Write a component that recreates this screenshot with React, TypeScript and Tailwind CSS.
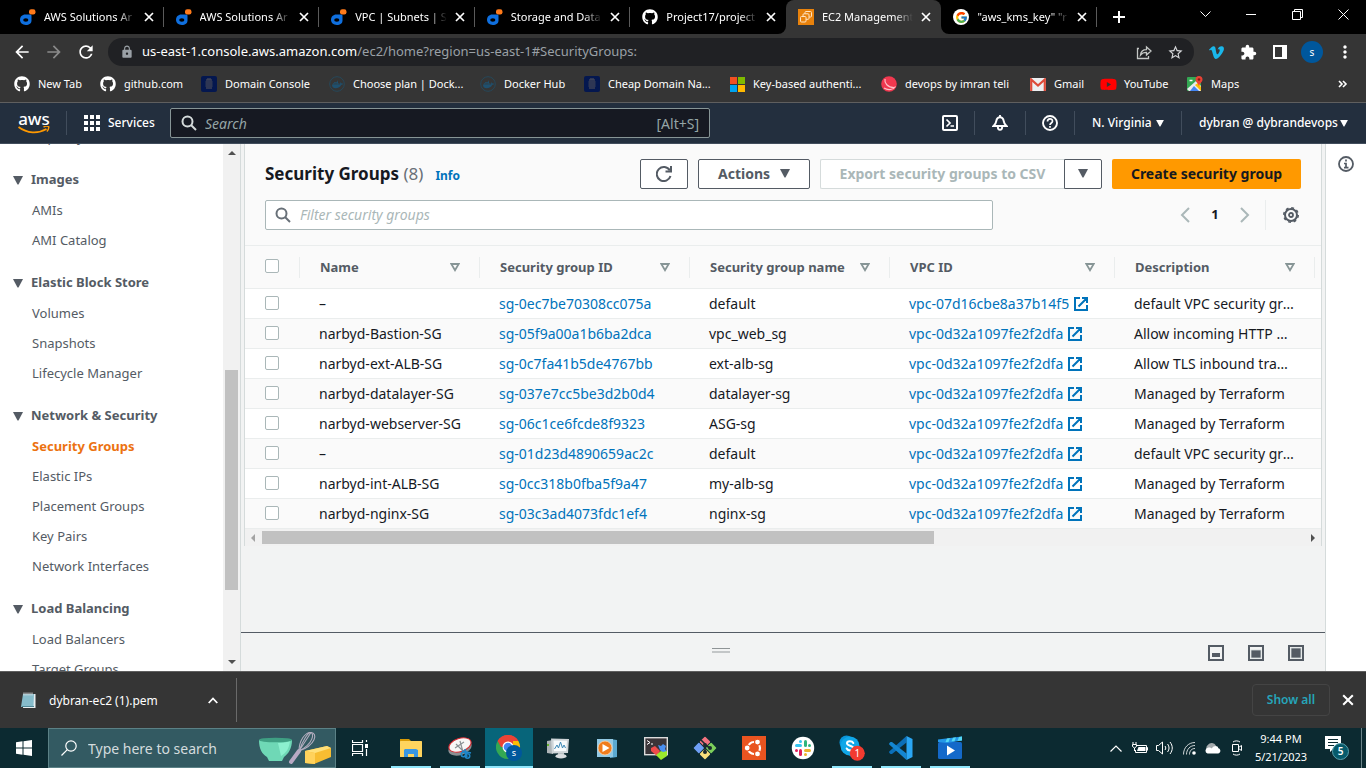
import React from "react";
import {
  MdArrowBack,
  MdArrowForward,
  MdExtension,
  MdLock,
  MdMoreVert,
  MdRefresh,
  MdStarBorder,
} from "react-icons/md";
import { FaDocker, FaGithub, FaVimeoV, FaYoutube } from "react-icons/fa";
import { FcGoogle } from "react-icons/fc";

/* ---------- shared icons ---------- */

function DareyIcon() {
  return (
    <svg width="16" height="16" viewBox="0 0 16 16" aria-hidden="true">
      <path fill="#0f6fde" d="M5.500 5.500h4.500c1 0 1.500.5 1.500 1.500v4.500c0 2.800-2.300 4.500-5.700 4.500C2.300 16 0 13.700 0 10.800s2-5.300 5.500-5.300z" />
      <ellipse cx="5.800" cy="11" rx="2.600" ry="1.700" fill="#000" />
      <rect x="9" y="0.300" width="6.500" height="5.200" rx="2.200" fill="#ff7a1a" />
    </svg>
  );
}

function Ec2Icon() {
  return (
    <svg width="16" height="16" viewBox="0 0 16 16" aria-hidden="true">
      <rect width="16" height="16" fill="#e8820c" />
      <g fill="#e8820c" stroke="#ffe3c2" strokeWidth="1">
        <rect x="7" y="2.500" width="6.500" height="5.500" rx="1" />
        <rect x="5" y="4.800" width="6" height="5.500" rx="1" />
        <rect x="2.500" y="7.500" width="5.500" height="5.500" rx="1" />
      </g>
    </svg>
  );
}

function CloseIcon({ size = 10 }: { size?: number }) {
  return (
    <svg width={size} height={size} viewBox="0 0 10 10" aria-hidden="true">
      <path d="M1 1l8 8M9 1l-8 8" stroke="currentColor" strokeWidth="1.700" fill="none" />
    </svg>
  );
}

function Triangle({ className = "" }: { className?: string }) {
  return (
    <svg width="10" height="9" viewBox="0 0 10 9" className={"shrink-0 " + className} aria-hidden="true">
      <path d="M0 0h10L5.500 8.500h-1z" fill="currentColor" />
    </svg>
  );
}

function SortIcon() {
  return (
    <svg width="10" height="9" viewBox="0 0 10 9" aria-hidden="true">
      <path d="M1.300 1h7.400L5 7.200z" fill="none" stroke="#879596" strokeWidth="1.800" />
    </svg>
  );
}

function SearchIcon({ className = "" }: { className?: string }) {
  return (
    <svg width="16" height="16" viewBox="0 0 16 16" className={className} aria-hidden="true">
      <circle cx="6.500" cy="6.500" r="5" fill="none" stroke="currentColor" strokeWidth="2" />
      <path d="M10 10l5 5" stroke="currentColor" strokeWidth="2" />
    </svg>
  );
}

/* ---------- browser: tabs ---------- */

type TabInfo = { title: string; icon: React.ReactNode; active?: boolean; beforeActive?: boolean };

const tabs: TabInfo[] = [
  { title: "AWS Solutions Ar", icon: <DareyIcon /> },
  { title: "AWS Solutions Ar", icon: <DareyIcon /> },
  { title: "VPC | Subnets | Se", icon: <DareyIcon /> },
  { title: "Storage and Data", icon: <DareyIcon /> },
  { title: "Project17/project", icon: <FaGithub size={16} />, beforeActive: true },
  { title: "EC2 Management", icon: <Ec2Icon />, active: true },
  {
    title: '"aws_kms_key" "r',
    icon: (
      <span className="flex size-4 items-center justify-center rounded-full bg-white">
        <FcGoogle size={13} />
      </span>
    ),
  },
];

function Tab({ tab }: { tab: TabInfo }) {
  return (
    <div
      role="tab"
      aria-selected={!!tab.active}
      className={
        "relative flex h-[34px] min-w-0 flex-1 items-center pl-3 pr-[10px] text-white " +
        (tab.active ? "rounded-t-lg bg-[#353535]" : "")
      }
    >
      <span className="mr-2 flex size-4 shrink-0 items-center">{tab.icon}</span>
      <span className="min-w-0 flex-1 overflow-hidden whitespace-nowrap [mask-image:linear-gradient(to_right,#000_80%,transparent)]">
        {tab.title}
      </span>
      <button aria-label={"Close " + tab.title} className="ml-2 flex w-[10px] shrink-0">
        <CloseIcon />
      </button>
      {tab.active ? (
        <>
          <svg className="absolute bottom-0 -left-2" width="8" height="8" viewBox="0 0 8 8" aria-hidden="true">
            <path d="M8 0v8H0a8 8 0 0 0 8-8z" fill="#353535" />
          </svg>
          <svg className="absolute bottom-0 -right-2" width="8" height="8" viewBox="0 0 8 8" aria-hidden="true">
            <path d="M0 0v8h8a8 8 0 0 1-8-8z" fill="#353535" />
          </svg>
        </>
      ) : (
        !tab.beforeActive && <span className="absolute top-[7px] right-0 h-5 w-px bg-[#5a5a5a]" />
      )}
    </div>
  );
}

function TabStrip() {
  return (
    <div className="flex h-[34px] shrink-0 items-stretch bg-black pl-2">
      <div role="tablist" className="flex w-[1089px] min-w-0">
        {tabs.map((t, i) => (
          <Tab key={i} tab={t} />
        ))}
      </div>
      <button aria-label="New tab" className="ml-4 flex items-center text-white">
        <svg width="12" height="12" viewBox="0 0 12 12" aria-hidden="true">
          <path d="M6 0v12M0 6h12" stroke="currentColor" strokeWidth="2" />
        </svg>
      </button>
      <div className="ml-auto flex h-7 text-white">
        <button aria-label="Search tabs" className="flex w-[46px] items-center justify-center">
          <svg width="11" height="7" viewBox="0 0 11 7" aria-hidden="true">
            <path d="M.5.500l5 5 5-5" fill="none" stroke="currentColor" />
          </svg>
        </button>
        <button aria-label="Minimize" className="flex w-[46px] items-center justify-center">
          <span className="h-px w-[10px] bg-white" />
        </button>
        <button aria-label="Restore" className="flex w-[46px] items-center justify-center">
          <svg width="11" height="11" viewBox="0 0 11 11" aria-hidden="true">
            <path d="M.5 2.500h8v8h-8zM2.500 2.500v-2h8v8h-2" fill="none" stroke="currentColor" />
          </svg>
        </button>
        <button aria-label="Close window" className="flex w-[46px] items-center justify-center">
          <svg width="11" height="11" viewBox="0 0 11 11" aria-hidden="true">
            <path d="M.5.500l10 10M10.500.500l-10 10" fill="none" stroke="currentColor" />
          </svg>
        </button>
      </div>
    </div>
  );
}

/* ---------- browser: toolbar and bookmarks ---------- */

function Toolbar() {
  return (
    <div className="flex h-9 shrink-0 items-center bg-[#353535] pr-3 pl-3 text-white">
      <button aria-label="Back" className="flex w-5 justify-center">
        <MdArrowBack size={20} />
      </button>
      <button aria-label="Forward" className="ml-3 flex w-5 justify-center text-[#8a8a8a]">
        <MdArrowForward size={20} />
      </button>
      <button aria-label="Reload" className="ml-3 flex w-5 justify-center">
        <MdRefresh size={20} />
      </button>
      <div className="ml-3 flex h-7 min-w-0 flex-1 items-center rounded-full bg-[#202124] pr-[10px] pl-3">
        <MdLock size={14} className="mr-2 shrink-0 text-[#9aa0a6]" />
        <span className="truncate text-[13px] text-[#9aa0a6]">
          <span className="text-white">us-east-1.console.aws.amazon.com</span>/ec2/home?region=us-east-1#SecurityGroups:
        </span>
        <button aria-label="Share" className="ml-auto text-[#c4c7c5]">
          <svg width="16" height="16" viewBox="0 0 16 16" aria-hidden="true">
            <path
              d="M3 4.500H1.500v10h11V12M4.500 11c.4-3.600 2.500-5.300 6-5.300V3L15 7l-4.500 4V8.300c-2.600 0-4.500.7-6 2.700z"
              fill="none"
              stroke="currentColor"
              strokeWidth="1.300"
            />
          </svg>
        </button>
        <button aria-label="Bookmark this page" className="ml-[15px] text-[#d5d7d9]">
          <MdStarBorder size={17} />
        </button>
      </div>
      <button aria-label="Vimeo" className="ml-[14px] text-[#1ab7ea]">
        <FaVimeoV size={17} />
      </button>
      <button aria-label="Extensions" className="ml-[15px]">
        <MdExtension size={17} />
      </button>
      <button aria-label="Side panel" className="ml-4">
        <svg width="14" height="14" viewBox="0 0 14 14" aria-hidden="true">
          <path d="M1 1h12v12H1z" fill="none" stroke="currentColor" strokeWidth="2" />
          <path d="M9 1h4v12H9z" fill="currentColor" />
        </svg>
      </button>
      <button
        aria-label="Profile"
        className="ml-[14px] flex size-[22px] items-center justify-center rounded-full bg-[#00579c] text-[10px]"
      >
        s
      </button>
      <button aria-label="Menu" className="ml-[13px] flex w-[18px] justify-center">
        <MdMoreVert size={20} className="shrink-0" />
      </button>
    </div>
  );
}

function NamecheapIcon() {
  return (
    <svg width="16" height="16" viewBox="0 0 16 16" aria-hidden="true">
      <rect width="16" height="16" rx="2" fill="#04174f" />
      <path d="M5 4h6M4.500 6h7M4.500 8h7M4.500 10h7M5 12h6M6 3h4" stroke="#3c4257" strokeWidth="1.400" />
    </svg>
  );
}

function DockerIcon() {
  return (
    <span className="relative flex size-4 shrink-0 items-center justify-center text-[#1f506e]">
      <svg className="absolute inset-0" width="16" height="16" viewBox="0 0 16 16" aria-hidden="true">
        <circle cx="8" cy="8" r="7.300" fill="none" stroke="#26485a" strokeWidth="1" />
      </svg>
      <FaDocker size={11} />
    </span>
  );
}

function MicrosoftIcon() {
  return (
    <svg width="15" height="15" viewBox="0 0 15 15" aria-hidden="true">
      <rect width="7" height="7" fill="#f25022" />
      <rect x="8" width="7" height="7" fill="#7fba00" />
      <rect y="8" width="7" height="7" fill="#00a4ef" />
      <rect x="8" y="8" width="7" height="7" fill="#ffb900" />
    </svg>
  );
}

function BallIcon() {
  return (
    <svg width="16" height="16" viewBox="0 0 16 16" aria-hidden="true">
      <circle cx="8" cy="8" r="7.800" fill="#f0384f" />
      <path d="M4 3c-.8 4 2.500 8.500 9 8.500M3 12c4 2.500 9 2 11.500-1.500" fill="none" stroke="#ffc0c8" strokeWidth="1.200" />
    </svg>
  );
}

function GmailIcon() {
  return (
    <svg width="16" height="13" viewBox="0 0 16 13" aria-hidden="true">
      <rect width="16" height="13" rx="1" fill="#eceff1" />
      <path d="M1.200 13V1.500L8 7.500l6.800-6V13" fill="none" stroke="#dd4b39" strokeWidth="2.200" />
    </svg>
  );
}

function MapsIcon() {
  return (
    <svg width="16" height="16" viewBox="0 0 16 16" aria-hidden="true">
      <rect y="1" width="14" height="14" rx="1" fill="#34a853" />
      <path d="M0 13L9 5l5 5v5H2z" fill="#e8eaed" />
      <path d="M3 15l4-5 5 5z" fill="#4285f4" />
      <path d="M8 9l3-2 3 4v4z" fill="#fbbc04" />
      <path d="M2.500 4.500h3" stroke="#fff" strokeWidth="1.500" />
      <path d="M12 0a3.500 3.500 0 0 1 3.500 3.500C15.500 6 12.500 7 12 10.500 11.500 7 8.500 6 8.500 3.500A3.500 3.500 0 0 1 12 0z" fill="#ea4335" />
      <circle cx="12" cy="3.500" r="1.300" fill="#8b1a12" />
    </svg>
  );
}

const bookmarks: { label: string; icon: React.ReactNode; width: string }[] = [
  { label: "New Tab", icon: <FaGithub size={16} />, width: "w-[86px]" },
  { label: "github.com", icon: <FaGithub size={16} />, width: "w-[101px]" },
  { label: "Domain Console", icon: <NamecheapIcon />, width: "w-[128px]" },
  { label: "Choose plan | Dock...", icon: <DockerIcon />, width: "w-[151px]" },
  { label: "Docker Hub", icon: <DockerIcon />, width: "w-[104px]" },
  { label: "Cheap Domain Na...", icon: <NamecheapIcon />, width: "w-[145px]" },
  { label: "Key-based authenti...", icon: <MicrosoftIcon />, width: "w-[152px]" },
  { label: "devops by imran teli", icon: <BallIcon />, width: "w-[149px]" },
  { label: "Gmail", icon: <GmailIcon />, width: "w-[70px]" },
  { label: "YouTube", icon: <FaYoutube size={17} className="shrink-0 text-[#f00]" />, width: "w-[87px]" },
  { label: "Maps", icon: <MapsIcon />, width: "w-[60px]" },
];

function Bookmarks() {
  return (
    <nav
      aria-label="Bookmarks"
      className="flex h-[33px] shrink-0 items-center border-b border-[#5f5f5f] bg-[#353535] pb-1 pr-[18px] pl-[14px] text-white"
    >
      {bookmarks.map((b) => (
        <a key={b.label} href="#" className={"flex shrink-0 items-center whitespace-nowrap " + b.width}>
          <span className="mr-2 flex w-4 shrink-0 items-center justify-center">{b.icon}</span>
          {b.label}
        </a>
      ))}
      <button aria-label="More bookmarks" className="ml-auto">
        <svg width="10" height="8" viewBox="0 0 10 8" aria-hidden="true">
          <path d="M1 1l3 3-3 3M5 1l3 3-3 3" fill="none" stroke="currentColor" strokeWidth="1.600" />
        </svg>
      </button>
    </nav>
  );
}

/* ---------- console header ---------- */

function AwsLogo() {
  return (
    <a href="#" aria-label="AWS home" className="flex w-8 flex-col items-center text-white">
      <span className="text-[17px] leading-[14px] font-medium">aws</span>
      <svg width="32" height="8" viewBox="0 0 32 8" aria-hidden="true">
        <path d="M.5 1C9 7.500 20 8 28.500 3" fill="none" stroke="#f90" strokeWidth="1.800" />
        <path d="M25.500 1c2-1 4.200-.9 5.200-.3.300 1.500-.6 3.600-1.900 4.800" fill="none" stroke="#f90" strokeWidth="1.400" />
      </svg>
    </a>
  );
}

function HeaderDivider() {
  return <span className="h-6 w-px shrink-0 bg-[#414d5c]" />;
}

function ConsoleHeader() {
  return (
    <header className="flex h-[41px] shrink-0 items-center border-b border-[#414d5c] bg-[#232f3e] pl-[18px] text-[12px] font-medium text-white">
      <AwsLogo />
      <span className="ml-4 flex">
        <HeaderDivider />
      </span>
      <button className="ml-[17px] flex items-center">
        <svg width="16" height="16" viewBox="0 0 16 16" fill="currentColor" aria-hidden="true">
          <path d="M0 0h4v4H0zM6 0h4v4H6zM12 0h4v4h-4zM0 6h4v4H0zM6 6h4v4H6zM12 6h4v4h-4zM0 12h4v4H0zM6 12h4v4H6zM12 12h4v4h-4z" />
        </svg>
        <span className="ml-2 w-12 text-left whitespace-nowrap">Services</span>
      </button>
      <label className="ml-[14px] flex h-[30px] max-w-[540px] flex-1 items-center rounded-xs border border-[#879596] bg-[#161922] px-[10px] text-[14px] font-normal text-[#95a5a6]">
        <SearchIcon className="mr-2 text-[#d5dbdb]" />
        <input
          aria-label="Search"
          placeholder="Search"
          className="min-w-0 flex-1 bg-transparent italic outline-none placeholder:text-[#95a5a6]"
        />
        <span>[Alt+S]</span>
      </label>
      <div className="ml-auto flex items-center">
        <button aria-label="CloudShell" className="mr-4">
          <svg width="16" height="16" viewBox="0 0 16 16" aria-hidden="true" fill="none" stroke="currentColor" strokeWidth="2">
            <rect x="1" y="1" width="14" height="14" rx="1" />
            <path d="M4.500 4.500L8 8l-3.500 3.500M8.500 11h3.500" strokeWidth="1.700" />
          </svg>
        </button>
        <HeaderDivider />
        <button aria-label="Notifications" className="mx-[17px]">
          <svg width="16" height="16" viewBox="0 0 16 16" aria-hidden="true" fill="none" stroke="currentColor" strokeWidth="1.900">
            <path d="M8 0v2.500M1.500 11h13c-2-1.500-2.500-3-2.800-5C11.300 3.500 10 2.300 8 2.300S4.700 3.500 4.300 6c-.3 2-.8 3.500-2.800 5z" />
            <path d="M5.800 11.500c0 4.500 4.400 4.500 4.400 0" />
          </svg>
        </button>
        <HeaderDivider />
        <button aria-label="Help" className="mx-4">
          <svg width="16" height="16" viewBox="0 0 16 16" aria-hidden="true" fill="none" stroke="currentColor" strokeWidth="1.900">
            <circle cx="8" cy="8" r="7" />
            <path d="M5.500 6.500C5.500 3 10.500 3 10.500 6.300 10.500 8 8 8 8 10M8 11v1.800" strokeWidth="1.700" />
          </svg>
        </button>
        <HeaderDivider />
        <button className="mx-[17px] flex w-[72px] items-center justify-between whitespace-nowrap">
          N. Virginia
          <Triangle className="h-[7px] w-2" />
        </button>
        <HeaderDivider />
        <button className="ml-[17px] mr-[18px] flex w-[149px] items-center justify-between whitespace-nowrap">
          dybran @ dybrandevops
          <Triangle className="h-[7px] w-2" />
        </button>
      </div>
    </header>
  );
}

/* ---------- sidebar ---------- */

const sections: { title: string; items: string[] }[] = [
  { title: "Images", items: ["AMIs", "AMI Catalog"] },
  { title: "Elastic Block Store", items: ["Volumes", "Snapshots", "Lifecycle Manager"] },
  {
    title: "Network & Security",
    items: ["Security Groups", "Elastic IPs", "Placement Groups", "Key Pairs", "Network Interfaces"],
  },
  { title: "Load Balancing", items: ["Load Balancers", "Target Groups"] },
];

function SideLink({ label }: { label: string }) {
  const selected = label === "Security Groups";
  return (
    <li className="flex h-[30px] items-center pl-8">
      <a href="#" className={selected ? "font-bold text-[#ec7211]" : "text-[#545b64]"}>
        {label}
      </a>
    </li>
  );
}

function Sidebar() {
  return (
    <div className="flex w-[241px] shrink-0 overflow-hidden border-r border-[#d5dbdb] bg-white">
      <nav aria-label="EC2 navigation" className="-mt-[21px] flex-1">
        <ul>
          <SideLink label="Capacity Reservations" />
        </ul>
        {sections.map((s) => (
          <section key={s.title}>
            <h2 className="mt-[11px] flex h-8 items-center pl-[13px] font-bold text-[#545b64]">
              <Triangle className="mr-2" />
              {s.title}
            </h2>
            <ul>
              {s.items.map((i) => (
                <SideLink key={i} label={i} />
              ))}
            </ul>
          </section>
        ))}
      </nav>
      <div className="flex w-[17px] flex-col items-center bg-[#f1f1f1] py-[7px]">
        <svg width="8" height="4" viewBox="0 0 8 4" aria-hidden="true">
          <path d="M0 4l4-4 4 4z" fill="#505050" />
        </svg>
        <div className="flex w-full flex-1 flex-col px-[2px]">
          <span className="grow-[215]" />
          <span className="grow-[220] bg-[#c1c1c1]" />
          <span className="grow-[70]" />
        </div>
        <svg width="8" height="4" viewBox="0 0 8 4" aria-hidden="true">
          <path d="M0 0l4 4 4-4z" fill="#505050" />
        </svg>
      </div>
    </div>
  );
}

/* ---------- security groups ---------- */

const columns = ["Name", "Security group ID", "Security group name", "VPC ID", "Description"];

const mainVpc = "vpc-0d32a1097fe2f2dfa";

const rows = [
  ["–", "sg-0ec7be70308cc075a", "default", "vpc-07d16cbe8a37b14f5", "default VPC security group"],
  ["narbyd-Bastion-SG", "sg-05f9a00a1b6ba2dca", "vpc_web_sg", mainVpc, "Allow incoming HTTP & HTTPS"],
  ["narbyd-ext-ALB-SG", "sg-0c7fa41b5de4767bb", "ext-alb-sg", mainVpc, "Allow TLS inbound traffic"],
  ["narbyd-datalayer-SG", "sg-037e7cc5be3d2b0d4", "datalayer-sg", mainVpc, "Managed by Terraform"],
  ["narbyd-webserver-SG", "sg-06c1ce6fcde8f9323", "ASG-sg", mainVpc, "Managed by Terraform"],
  ["–", "sg-01d23d4890659ac2c", "default", mainVpc, "default VPC security group"],
  ["narbyd-int-ALB-SG", "sg-0cc318b0fba5f9a47", "my-alb-sg", mainVpc, "Managed by Terraform"],
  ["narbyd-nginx-SG", "sg-03c3ad4073fdc1ef4", "nginx-sg", mainVpc, "Managed by Terraform"],
];

function Checkbox({ label }: { label: string }) {
  return (
    <input
      type="checkbox"
      aria-label={label}
      className="block size-[14px] appearance-none rounded-xs border border-[#aab7b8] bg-white"
    />
  );
}

function ExternalIcon() {
  return (
    <svg width="14" height="14" viewBox="0 0 14 14" className="shrink-0" aria-hidden="true">
      <path d="M6 1H1v12h12V8M8 1h5v5M12.500 1.500l-8 8" fill="none" stroke="#0073bb" strokeWidth="2" />
    </svg>
  );
}

function GroupTable() {
  return (
    <table className="w-full table-fixed border-collapse">
      <colgroup>
        <col className="w-[55px]" />
        <col className="w-[180px]" />
        <col className="w-[210px]" />
        <col className="w-[200px]" />
        <col className="w-[225px]" />
        <col className="w-[200px]" />
        <col />
      </colgroup>
      <thead>
        <tr className="h-[43px] border-y border-[#eaeded] bg-[#fafafa] text-left text-[#545b64]">
          <th className="p-0">
            <div className="flex h-[21px] items-center border-r border-[#eaeded] pb-[2px] pl-5">
              <Checkbox label="Select all" />
            </div>
          </th>
          {columns.map((c) => (
            <th key={c} className="p-0 text-[13px] font-bold">
              <div className="flex h-[21px] items-center justify-between border-r border-[#eaeded] pt-px pr-[19px] pl-5 whitespace-nowrap">
                {c}
                <SortIcon />
              </div>
            </th>
          ))}
          <td className="p-0" />
        </tr>
      </thead>
      <tbody className="text-[14px] leading-5">
        {rows.map((r, i) => (
          <tr key={r[1]} className={"h-[30px] border-b border-[#eaeded] " + (i % 2 ? "bg-[#fafafa]" : "bg-white")}>
            <td className="p-0 pb-[2px] pl-5">
              <Checkbox label={"Select " + r[1]} />
            </td>
            <td className="p-0 pl-[19px]">{r[0]}</td>
            <td className="p-0 pl-[19px]">
              <a href="#" className="text-[#0073bb]">
                {r[1]}
              </a>
            </td>
            <td className="p-0 pl-[19px]">{r[2]}</td>
            <td className="p-0 pl-[19px]">
              <a href="#" className="flex items-center gap-[5px] text-[#0073bb]">
                {r[3]}
                <ExternalIcon />
              </a>
            </td>
            <td className="truncate p-0 pr-5 pl-[19px]">{r[4]}</td>
            <td className="p-0" />
          </tr>
        ))}
      </tbody>
    </table>
  );
}

function PanelToolbar() {
  return (
    <div className="px-5 pt-[15px] pb-[15px]">
      <div className="flex items-center">
        <h1 className="text-[17px] font-bold whitespace-nowrap">
          Security Groups <span className="font-normal text-[#687078]">(8)</span>
        </h1>
        <a href="#" className="ml-3 pt-1 text-[12px] font-bold text-[#0073bb]">
          Info
        </a>
        <div className="ml-auto flex h-[30px] text-[14px] font-bold text-[#545b64]">
          <button aria-label="Refresh" className="flex w-12 items-center justify-center rounded-xs border border-[#545b64] bg-white">
            <svg width="16" height="16" viewBox="0 0 16 16" aria-hidden="true" fill="none" stroke="currentColor" strokeWidth="2">
              <path d="M14.500 10A7 7 0 1 1 13.800 4.500" />
              <path d="M15 0v5.500H9.500" />
            </svg>
          </button>
          <button className="ml-[10px] flex w-28 items-center justify-center gap-[10px] rounded-xs border border-[#545b64] bg-white pb-px">
            Actions
            <Triangle />
          </button>
          <button disabled className="ml-[10px] w-[244px] rounded-l-xs border border-r-0 border-[#d5dbdb] bg-white pb-px whitespace-nowrap text-[#aab7b8]">
            Export security groups to CSV
          </button>
          <button aria-label="Export options" className="flex w-[38px] items-center justify-center rounded-r-xs border border-[#545b64] bg-white pb-px">
            <Triangle />
          </button>
          <button className="ml-[10px] w-[189px] rounded-xs bg-[#f90] pb-px whitespace-nowrap text-[#16191f]">
            Create security group
          </button>
        </div>
      </div>
      <div className="mt-[11px] flex items-center justify-between">
        <label className="flex h-[30px] max-w-[728px] flex-1 items-center rounded-xs border border-[#aab7b8] bg-white px-[9px] pb-px text-[#687078]">
          <SearchIcon className="mr-[9px]" />
          <input
            aria-label="Filter security groups"
            placeholder="Filter security groups"
            className="min-w-0 flex-1 bg-transparent text-[14px] italic outline-none placeholder:text-[#aab7b8]"
          />
        </label>
        <div className="flex h-[30px] items-center text-[#aab7b8]">
          <button aria-label="Previous page">
            <svg width="10" height="16" viewBox="0 0 10 16" aria-hidden="true">
              <path d="M9 1L2 8l7 7" fill="none" stroke="currentColor" strokeWidth="2" />
            </svg>
          </button>
          <button className="w-[50px] text-center text-[13px] font-bold text-[#16191f]">1</button>
          <button aria-label="Next page">
            <svg width="10" height="16" viewBox="0 0 10 16" aria-hidden="true">
              <path d="M1 1l7 7-7 7" fill="none" stroke="currentColor" strokeWidth="2" />
            </svg>
          </button>
          <span className="ml-[15px] h-full w-px bg-[#eaeded]" />
          <button aria-label="Preferences" className="mr-[2px] ml-[17px] text-[#545b64]">
            <svg width="16" height="16" viewBox="0 0 16 16" aria-hidden="true" fill="none" stroke="currentColor">
              <circle cx="8" cy="8" r="6" strokeWidth="2" />
              <circle cx="8" cy="8" r="7.200" strokeWidth="1.600" strokeDasharray="2.830 2.825" />
              <circle cx="8" cy="8" r="2" strokeWidth="1.800" />
            </svg>
          </button>
        </div>
      </div>
    </div>
  );
}

function LayoutIcon({ kind }: { kind: "bottom" | "half" | "full" }) {
  return (
    <svg width="16" height="16" viewBox="0 0 16 16" aria-hidden="true">
      <rect x="1" y="1" width="14" height="14" fill="none" stroke="#545b64" strokeWidth="2" />
      {kind === "bottom" && <rect x="4" y="8" width="8" height="4" fill="#545b64" />}
      {kind === "half" && <rect x="3" y="5" width="10" height="8" fill="#545b64" stroke="#d5dbdb" strokeWidth="0.800" />}
      {kind === "full" && <rect x="3" y="3" width="10" height="10" fill="#545b64" stroke="#d5dbdb" strokeWidth="0.800" />}
    </svg>
  );
}

function Content() {
  return (
    <main className="flex min-w-0 flex-1 flex-col border-r border-[#d5dbdb] bg-[#f2f3f3]">
      <div className="mx-[3px] border-x border-[#d5dbdb] bg-[#fafafa]">
        <PanelToolbar />
        <GroupTable />
        <div className="flex h-[17px] items-center bg-[#f1f1f1] px-[6px]">
          <svg width="4" height="8" viewBox="0 0 4 8" aria-hidden="true">
            <path d="M4 0v8L0 4z" fill="#a3a3a3" />
          </svg>
          <div className="mx-[7px] flex h-[13px] flex-1">
            <span className="grow-[672] bg-[#c1c1c1]" />
            <span className="grow-[370]" />
          </div>
          <svg width="4" height="8" viewBox="0 0 4 8" aria-hidden="true">
            <path d="M0 0v8l4-4z" fill="#505050" />
          </svg>
        </div>
      </div>
      <div className="mt-auto flex h-[39px] shrink-0 items-center border-t border-[#545b64] pr-[21px]">
        <span className="mx-auto mb-1 h-[5px] w-[18px] border-t border-b-2 border-t-[#8f9496] border-b-[#c3c6c7]" />
        <div className="flex gap-6 pt-px pl-2">
          <button aria-label="Small details panel">
            <LayoutIcon kind="bottom" />
          </button>
          <button aria-label="Half details panel">
            <LayoutIcon kind="half" />
          </button>
          <button aria-label="Full details panel">
            <LayoutIcon kind="full" />
          </button>
        </div>
      </div>
    </main>
  );
}

function InfoRail() {
  return (
    <aside className="flex w-10 shrink-0 justify-center bg-white pt-3">
      <button aria-label="Open help panel" className="h-4 text-[#545b64]">
        <svg width="16" height="16" viewBox="0 0 16 16" aria-hidden="true" fill="none" stroke="currentColor" strokeWidth="1.800">
          <circle cx="8" cy="8" r="7" />
          <path d="M8 3.500v2M6 7.500h2v4M6 11.700h4.500" strokeWidth="1.700" />
        </svg>
      </button>
    </aside>
  );
}

/* ---------- downloads ---------- */

function Downloads() {
  return (
    <div className="flex h-[57px] shrink-0 items-center border-t border-[#5f5f5f] bg-[#353535] pr-3 pl-5 text-[12px] text-white">
      <svg width="17" height="17" viewBox="0 0 17 17" aria-hidden="true">
        <path d="M4 2h11.500v14H3z" fill="#e8eef0" />
        <path d="M3 2h11l-.5 13H1z" fill="#86bccb" />
        <path d="M2 14.500h12" stroke="#4f8796" />
        <path d="M4 .5v3M6 .5v3M8 .5v3M10 .5v3M12 .5v3" stroke="#d9dfe2" />
      </svg>
      <button className="ml-3 w-[150px] pt-px text-left">dybran-ec2 (1).pem</button>
      <button aria-label="Download options" className="ml-[9px]">
        <svg width="10" height="7" viewBox="0 0 10 7" aria-hidden="true">
          <path d="M.7 6L5 1.500 9.300 6" fill="none" stroke="currentColor" strokeWidth="1.800" />
        </svg>
      </button>
      <span className="ml-[18px] h-11 w-px bg-[#6a6a6a]" />
      <button className="ml-auto h-8 w-[78px] rounded border border-[#444] font-semibold text-[#26a5ba]">Show all</button>
      <button aria-label="Close downloads" className="ml-3">
        <CloseIcon size={12} />
      </button>
    </div>
  );
}

/* ---------- taskbar ---------- */

function FolderIcon() {
  return (
    <svg width="24" height="24" viewBox="0 0 24 24" aria-hidden="true">
      <path d="M1 3h9l2 2v3H1z" fill="#d99a06" />
      <rect x="1" y="5" width="22" height="16" rx="0.500" fill="#ffd45e" />
      <path d="M5 21v-7l1-1h11l2 1v7h-4v-3H9v3z" fill="#3997e3" />
    </svg>
  );
}

function SnipIcon() {
  return (
    <svg width="26" height="24" viewBox="0 0 26 24" aria-hidden="true">
      <ellipse cx="13" cy="12" rx="12" ry="7" transform="rotate(-18 13 12)" fill="#8a8f92" />
      <ellipse cx="13" cy="9" rx="11.500" ry="6.500" transform="rotate(-18 13 9)" fill="#f7f7f7" stroke="#d8282f" />
      <path d="M8 12l9-6M13 5l3 11M9 8l9 9" stroke="#8b9296" strokeWidth="1.200" />
      <path d="M15 15l9 2M18 13l2 8" stroke="#1f86c8" strokeWidth="1.600" />
      <circle cx="16.500" cy="18.500" r="2.200" fill="none" stroke="#1f86c8" strokeWidth="1.600" />
      <circle cx="20.500" cy="20" r="2.200" fill="none" stroke="#1f86c8" strokeWidth="1.600" />
    </svg>
  );
}

function ChromeIcon() {
  return (
    <svg width="26" height="26" viewBox="0 0 26 26" aria-hidden="true">
      <path d="M12 12L1.600 6A12 12 0 0 1 22.400 6z" fill="#ea4335" />
      <path d="M22.400 6A12 12 0 0 1 12 24l5-9V6z" fill="#fbbc04" />
      <path d="M1.600 6A12 12 0 0 0 12 24l5-9H8z" fill="#34a853" />
      <path d="M1.600 6A12 12 0 0 1 22.400 6H12v6H5z" fill="#ea4335" />
      <circle cx="12" cy="12" r="5.500" fill="#fff" />
      <circle cx="12" cy="12" r="4.300" fill="#4285f4" />
      <circle cx="18" cy="18" r="8" fill="#00579c" />
      <text x="18" y="21" textAnchor="middle" fontSize="9" fill="#fff" fontFamily="Noto Sans, sans-serif">
        s
      </text>
    </svg>
  );
}

function MonitorIcon() {
  return (
    <svg width="24" height="22" viewBox="0 0 24 22" aria-hidden="true">
      <path d="M1 4l6-1v14l-6-1z" fill="#aeb5b8" />
      <path d="M5 1.500l18 .5-1 14-16 .5z" fill="#cfd5d8" />
      <path d="M7.500 3.500l13.500.3-.8 10.200-12.200.3z" fill="#f7fafb" />
      <path d="M8.500 12l2.500-4 1.500 3 2-6 2 6 1.500-3 1.500 3" fill="none" stroke="#3a87b5" />
      <path d="M12 16h6v3h-6z" fill="#b9c0c3" />
      <ellipse cx="15" cy="19.200" rx="5.500" ry="2.300" fill="#d9dddf" />
      <rect x="1" y="7" width="2" height="2" fill="#67b32e" />
    </svg>
  );
}

function PlayerIcon() {
  return (
    <svg width="22" height="22" viewBox="0 0 22 22" aria-hidden="true">
      <path d="M14 2l7 1v17l-7 1z" fill="#5ba9d0" />
      <rect x="1" y="2" width="16" height="18" fill="#93c9e4" />
      <circle cx="9" cy="11" r="7" fill="#f07c1c" stroke="#fbd9b5" strokeWidth="0.800" />
      <path d="M6.500 7l7 4-7 4z" fill="#fff" />
    </svg>
  );
}

function CmderIcon() {
  return (
    <svg width="24" height="24" viewBox="0 0 24 24" aria-hidden="true">
      <rect x="0.700" y="1.700" width="22.600" height="17" fill="#3a3438" stroke="#dcdcdc" strokeWidth="1.400" />
      <path d="M3 4.500l3 2-3 2M7 8h2" fill="none" stroke="#fff" />
      <path d="M7 12l4-2 5 5-3 5-6-5z" fill="#ef4b4b" />
      <path d="M14 9l3 1 2-2 3 2-1 3 2 3-4 1-3-3z" fill="#4a8ff0" />
      <path d="M12 19l5-4 2 1 4-1v5l-6 4z" fill="#9bea2d" />
    </svg>
  );
}

function GitIcon() {
  return (
    <svg width="24" height="24" viewBox="0 0 24 24" aria-hidden="true">
      <g transform="rotate(45 12 12)">
        <rect x="3.800" y="3.800" width="7.700" height="7.700" rx="0.800" fill="#f2737f" />
        <rect x="12.500" y="3.800" width="7.700" height="7.700" rx="0.800" fill="#7ccf5b" />
        <rect x="3.800" y="12.500" width="7.700" height="7.700" rx="0.800" fill="#6f9ff5" />
        <rect x="12.500" y="12.500" width="7.700" height="7.700" rx="0.800" fill="#f9e07c" />
      </g>
      <path d="M8 4l4 4v8M12 9l5 3" stroke="#1a2a2e" strokeWidth="1.600" fill="none" />
      <circle cx="12" cy="9" r="2" fill="#1a2a2e" />
      <circle cx="17" cy="12" r="2" fill="#1a2a2e" />
      <circle cx="12" cy="16" r="2" fill="#1a2a2e" />
    </svg>
  );
}

function UbuntuIcon() {
  return (
    <span className="flex size-6 items-center justify-center bg-[#e95420]">
      <svg width="20" height="20" viewBox="0 0 20 20" aria-hidden="true">
        <circle cx="10" cy="10" r="6" fill="none" stroke="#fff" strokeWidth="2.200" />
        <g fill="#fff" stroke="#e95420" strokeWidth="1.200">
          <circle cx="3.200" cy="10" r="3" />
          <circle cx="13.500" cy="4.100" r="3" />
          <circle cx="13.500" cy="15.900" r="3" />
        </g>
      </svg>
    </span>
  );
}

function SlackIcon() {
  return (
    <svg width="24" height="24" viewBox="0 0 24 24" aria-hidden="true">
      <circle cx="12" cy="12" r="11.200" fill="#fff" />
      <g fill="#36c5f0">
        <rect x="8" y="4" width="3" height="3" rx="1.500" />
        <rect x="4" y="8" width="7" height="3" rx="1.500" />
      </g>
      <g fill="#2eb67d">
        <rect x="13" y="4" width="3" height="7" rx="1.500" />
        <rect x="17" y="8" width="3" height="3" rx="1.500" />
      </g>
      <g fill="#ecb22e">
        <rect x="13" y="13" width="7" height="3" rx="1.500" />
        <rect x="13" y="17" width="3" height="3" rx="1.500" />
      </g>
      <g fill="#e01e5a">
        <rect x="8" y="13" width="3" height="7" rx="1.500" />
        <rect x="4" y="13" width="3" height="3" rx="1.500" />
      </g>
    </svg>
  );
}

function SkypeIcon() {
  return (
    <svg width="26" height="26" viewBox="0 0 26 26" aria-hidden="true">
      <circle cx="7.500" cy="7.500" r="7" fill="#0a94d8" />
      <circle cx="14.500" cy="15" r="7" fill="#0a7fcb" />
      <circle cx="11" cy="11" r="9.500" fill="#10a7e8" />
      <path
        d="M14.300 8C13 5.500 8 5.700 8 8.300c0 3.200 6.300 1.700 6.300 5 0 2.800-5.300 3-6.600.2"
        fill="none"
        stroke="#fff"
        strokeWidth="2"
        strokeLinecap="round"
      />
      <circle cx="18.300" cy="18.300" r="7.500" fill="#f23b30" />
      <text x="18.300" y="21.800" textAnchor="middle" fontSize="10" fill="#fff" fontFamily="Noto Sans, sans-serif">
        1
      </text>
    </svg>
  );
}

function CodeIcon() {
  return (
    <svg width="24" height="24" viewBox="0 0 24 24" aria-hidden="true">
      <path d="M17.500 0v6.500L3 18 1.500 18 .2 16.700v-1.200z" fill="#0b6fb8" />
      <path d="M1.500 6L.2 7.300v1.200L17.500 24v-6.500L3 6z" fill="#1486d1" />
      <path d="M17.500 0L23.500 3v18l-6 3z" fill="#2aa7f5" />
    </svg>
  );
}

function MoviesIcon() {
  return (
    <svg width="24" height="24" viewBox="0 0 24 24" aria-hidden="true">
      <rect y="6" width="24" height="17" rx="1.500" fill="#1469c9" />
      <path d="M0 6V3.500L24 .500v4L9 7z" fill="#2497e8" />
      <path d="M9 2.500l3-.4-1.500 4h-3zM15 1.700l3-.4-1.500 4h-3zM21 .900l3-.4v4l-4.500.5z" fill="#55d8f5" />
      <path d="M9 9.500l8 5-8 5z" fill="#fff" />
    </svg>
  );
}

const apps: { name: string; icon: React.ReactNode; running?: boolean; active?: boolean }[] = [
  { name: "File Explorer", icon: <FolderIcon />, running: true },
  { name: "Snipping Tool", icon: <SnipIcon />, running: true },
  { name: "Google Chrome", icon: <ChromeIcon />, running: true, active: true },
  { name: "Performance Monitor", icon: <MonitorIcon /> },
  { name: "Media Player", icon: <PlayerIcon /> },
  { name: "Terminal", icon: <CmderIcon /> },
  { name: "Git", icon: <GitIcon /> },
  { name: "Ubuntu", icon: <UbuntuIcon /> },
  { name: "Slack", icon: <SlackIcon /> },
  { name: "Skype", icon: <SkypeIcon />, running: true },
  { name: "Visual Studio Code", icon: <CodeIcon />, running: true },
  { name: "Movies & TV", icon: <MoviesIcon />, running: true },
];

function BakingDoodle() {
  return (
    <svg width="74" height="34" viewBox="0 0 74 34" aria-hidden="true">
      <path d="M1 9h33c0 9-4 14-8 17l-2 4H11l-2-4C4 23 1 18 1 9z" fill="#6fd8b6" />
      <path d="M20 12c5 0 10-1 12-2-1 8-4 12-9 15z" fill="#8cf0cf" />
      <ellipse cx="17.500" cy="9" rx="16.500" ry="2.300" fill="#3f9f83" />
      <path d="M33 31l8-11" stroke="#b9a9c4" strokeWidth="4" strokeLinecap="round" />
      <g fill="none" stroke="#b3adbf" strokeWidth="1.100">
        <path d="M41 20C41 10 47 1 53 1.500 60 2 58 14 41 20z" />
        <path d="M41 20C45 9 50 1 53 1.500s3 11-12 18.500zM41 20L53 1.500" />
      </g>
      <path d="M47 20l22-5 4 2v9l-17 7-9-1z" fill="#f7bd32" />
      <path d="M47 20l22-5 4 2-16 5z" fill="#ffe07a" />
      <path d="M47 20l10 2v11l-10-1z" fill="#ffd25c" />
    </svg>
  );
}

function Taskbar() {
  return (
    <footer className="flex h-10 shrink-0 items-stretch bg-[#0c2a31] text-white">
      <button aria-label="Start" className="flex w-12 items-center justify-center">
        <svg width="16" height="16" viewBox="0 0 16 16" fill="#fff" aria-hidden="true">
          <path d="M0 2.200L6.500 1.300v6.200H0zM7.500 1.200L16 0v7.500H7.500zM0 8.500h6.500v6.200L0 13.800zM7.500 8.500H16V16l-8.500-1.200z" />
        </svg>
      </button>
      <label className="flex w-72 items-center border border-[#5b8186] bg-[#335a62] pr-[3px] pl-3">
        <svg width="16" height="16" viewBox="0 0 16 16" aria-hidden="true">
          <circle cx="10" cy="6" r="5.200" fill="none" stroke="#fff" strokeWidth="1.200" />
          <path d="M6.300 9.700L.5 15.500" stroke="#fff" strokeWidth="1.200" />
        </svg>
        <input
          aria-label="Type here to search"
          placeholder="Type here to search"
          className="ml-[11px] min-w-0 flex-1 bg-transparent text-[14px] outline-none placeholder:text-[#d3dcde]"
        />
        <BakingDoodle />
      </label>
      <button aria-label="Task view" className="flex w-12 items-center justify-center">
        <svg width="16" height="16" viewBox="0 0 16 16" aria-hidden="true" fill="none" stroke="#fff">
          <path d="M.5 0v2.500h10V0M.5 16v-2.500h10V16M.5 4.500h10v7H.5zM14.500 0v2M14.500 9v7" strokeWidth="1.200" />
          <path d="M14.500 4v4" strokeWidth="3" />
        </svg>
      </button>
      <div className="ml-[3px] flex gap-px">
        {apps.map((a) => (
          <button
            key={a.name}
            aria-label={a.name}
            className={"relative flex w-12 items-center justify-center " + (a.active ? "bg-[#07657a]" : "")}
          >
            {a.icon}
            {a.running && (
              <span className={"absolute bottom-0 h-[2px] bg-[#8fe6fb] " + (a.active ? "inset-x-0" : "inset-x-1")} />
            )}
          </button>
        ))}
      </div>
      <div className="ml-auto flex items-center">
        <button aria-label="Show hidden icons">
          <svg width="12" height="7" viewBox="0 0 12 7" aria-hidden="true">
            <path d="M.5 6.500L6 1l5.500 5.500" fill="none" stroke="#fff" strokeWidth="1.200" />
          </svg>
        </button>
        <svg className="ml-[10px]" width="16" height="12" viewBox="0 0 16 12" aria-hidden="true" fill="none" stroke="#fff">
          <path d="M5 3.500h9.500v7H3.500V8M14.500 5.500h1v3" />
          <path d="M6.500 5h7v4H5z" fill="#fff" stroke="none" />
          <path d="M1 0v2M4 0v2M.5 2.500h4v2l-2 1.500-2-1.500zM2.500 6v3" />
        </svg>
        <svg className="ml-2" width="17" height="14" viewBox="0 0 17 14" aria-hidden="true" fill="none" stroke="#fff">
          <path d="M.5 4.500h2L6.500 1v12L2.500 9.500h-2z" />
          <path d="M9 5c1 1.300 1 2.700 0 4M11.500 3c2 2.500 2 5.500 0 8M14 1c3 4 3 8 0 12" />
        </svg>
        <svg className="ml-[10px]" width="13" height="14" viewBox="0 0 13 14" aria-hidden="true" fill="none" stroke="#fff">
          <path d="M.5 13.500C.5 6.500 5.500 1.500 12 1.500M3.500 13.500C3.500 8.500 7 4.500 12 4.500M6.500 13.500c0-3.500 2-6 5.500-6" opacity="0.800" />
          <circle cx="11" cy="12" r="1.800" fill="#fff" stroke="none" />
        </svg>
        <svg className="ml-2" width="17" height="12" viewBox="0 0 17 12" aria-hidden="true">
          <path d="M3 8a4 4 0 0 1 .8-5A5 5 0 0 1 12 3.500l-3 4z" fill="#a4aaac" />
          <path d="M3.500 11.500a3 3 0 0 1 .5-5.800c1.600-.4 3 .2 3.800.8C10 3 14 3.500 14.300 6.200c3 .5 2.600 5.300-.3 5.300z" fill="#fff" />
        </svg>
        <svg className="ml-[10px]" width="12" height="16" viewBox="0 0 12 16" aria-hidden="true" fill="none" stroke="#fff">
          <path d="M1.500 4.500h6v7h-6zM7.500 7.500l3-2v5l-3-2M2 2c2-1.500 5-1.500 7 0M2 14c2 1.500 5 1.500 7 0" />
        </svg>
        <div className="ml-2 flex w-[60px] flex-col items-center text-[11px] leading-[18px] whitespace-nowrap">
          <span>9:44 PM</span>
          <span>5/21/2023</span>
        </div>
        <button aria-label="5 notifications" className="relative ml-[14px] size-6">
          <svg width="24" height="24" viewBox="0 0 24 24" aria-hidden="true">
            <path d="M0 0h16v13H8l-3 3v-3H0z" fill="#fff" />
            <path d="M3 3.500h10M3 6.500h10M3 9.500h6" stroke="#0c2a31" />
          </svg>
          <span className="absolute top-[7px] left-[7px] flex size-[17px] items-center justify-center rounded-full border border-[#5aa0ad] bg-[#075a6b] text-[10px] font-semibold">
            5
          </span>
        </button>
        <span className="mr-1 ml-3 h-10 w-px bg-[#6b8489]" />
      </div>
    </footer>
  );
}

export default function App() {
  return (
    <div className="flex h-screen flex-col overflow-hidden bg-white font-['Noto_Sans','Open_Sans',sans-serif] text-[11px] text-[#16191f]">
      <TabStrip />
      <Toolbar />
      <Bookmarks />
      <ConsoleHeader />
      <div className="flex min-h-0 flex-1 text-[13px]">
        <Sidebar />
        <Content />
        <InfoRail />
      </div>
      <Downloads />
      <Taskbar />
    </div>
  );
}
